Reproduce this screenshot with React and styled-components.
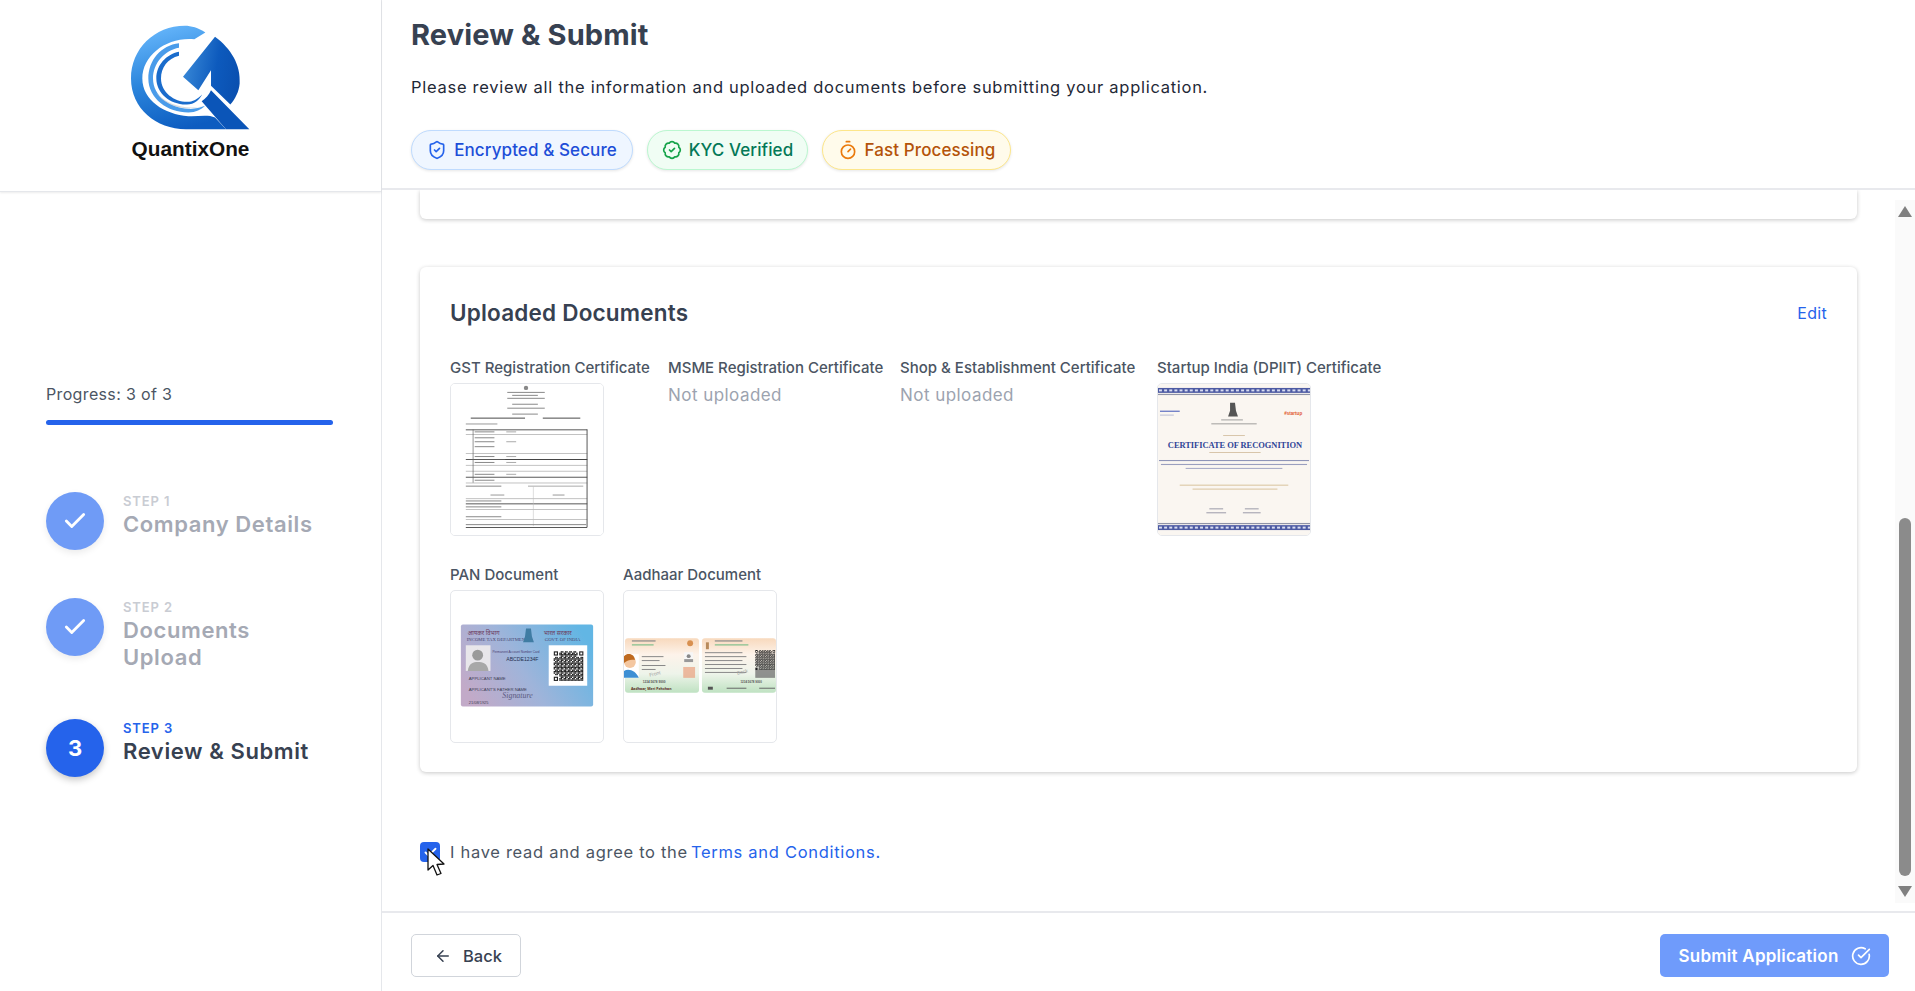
import React from 'react';
import styled, { createGlobalStyle } from 'styled-components';
import { ArrowLeft, BadgeCheck, Check, CircleCheckBig, ShieldCheck, Timer } from 'lucide-react';

const GlobalStyle = createGlobalStyle`
  html, body {
    margin: 0;
    padding: 0;
    background: #fff;
    font-family: Inter, "Noto Sans", sans-serif;
  }
  * {
    box-sizing: border-box;
  }
`;

const Page = styled.div`
  display: grid;
  grid-template-columns: 382px 1fr;
  width: 100%;
  height: 991px;
  overflow: hidden;
  background: #fff;
`;

const Sidebar = styled.aside`
  display: flex;
  flex-direction: column;
  border-right: 1px solid #e5e7eb;
`;

const Brand = styled.div`
  display: flex;
  flex-direction: column;
  align-items: center;
  height: 192px;
  padding-top: 25px;
  border-bottom: 1px solid #e5e7eb;
  box-shadow: 0 1px 2px rgba(0, 0, 0, 0.08);
`;

const BrandName = styled.div`
  margin-top: 5px;
  font-family: "Liberation Sans", Arial, sans-serif;
  font-size: 20.8px;
  line-height: 24px;
  font-weight: 700;
  color: #111;
`;

const SideBody = styled.div`
  padding: 190px 48px 0 46px;
`;

const ProgressLabel = styled.div`
  font-size: 16px;
  line-height: 24px;
  color: #4b5563;
  letter-spacing: 0.35px;
`;

const ProgressBar = styled.div`
  height: 5px;
  margin-top: 14px;
  border-radius: 3px;
  background: #2563eb;
`;

const Steps = styled.div`
  display: flex;
  flex-direction: column;
  gap: 48px;
  margin-top: 67px;
`;

const Step = styled.div`
  display: flex;
  gap: 19px;
`;

const StepCircle = styled.div`
  display: flex;
  flex: none;
  align-items: center;
  justify-content: center;
  width: 58px;
  height: 58px;
  border-radius: 50%;
  background: ${(p) => (p.$done ? '#6f9bf6' : '#2563eb')};
  color: #fff;
  font-size: 22px;
  font-weight: 700;
  box-shadow: 0 3px 7px rgba(0, 0, 0, ${(p) => (p.$done ? 0.08 : 0.22)});
`;

const StepText = styled.div`
  width: 192px;
`;

const StepLabel = styled.div`
  font-size: 13px;
  line-height: 19px;
  font-weight: 600;
  letter-spacing: 0.9px;
  color: ${(p) => (p.$done ? '#c9ccd3' : '#2563eb')};
`;

const StepTitle = styled.div`
  font-size: 22px;
  line-height: 27px;
  font-weight: 600;
  letter-spacing: 0.6px;
  color: ${(p) => (p.$done ? '#a5a9b4' : '#374151')};
`;

const Main = styled.main`
  display: flex;
  flex-direction: column;
  min-width: 0;
`;

const Header = styled.header`
  height: 190px;
  padding: 14px 29px 0;
  border-bottom: 2px solid #e8e9ed;
`;

const Title = styled.h1`
  margin: 0;
  font-size: 29px;
  line-height: 42px;
  font-weight: 700;
  color: #374151;
  letter-spacing: 0.12px;
`;

const Intro = styled.p`
  margin: 19px 0 0;
  font-size: 16.5px;
  line-height: 24px;
  color: #1f2937;
  letter-spacing: 0.72px;
`;

const Badges = styled.div`
  display: flex;
  gap: 14px;
  margin-top: 31px;
`;

const badgeColors = {
  blue: { bg: '#eff6ff', line: '#bfdbfe', text: '#1d4ed8', icon: '#2563eb' },
  green: { bg: '#f0fdf4', line: '#bbf7d0', text: '#047857', icon: '#16a34a' },
  amber: { bg: '#fffbeb', line: '#fde68a', text: '#b45309', icon: '#ea7a0c' },
};

const Badge = styled.span`
  display: inline-flex;
  align-items: center;
  justify-content: center;
  gap: 7px;
  width: ${(p) => p.$width}px;
  height: 40px;
  border: 1.5px solid ${(p) => badgeColors[p.$tone].line};
  border-radius: 20px;
  background: ${(p) => badgeColors[p.$tone].bg};
  color: ${(p) => badgeColors[p.$tone].text};
  font-size: 17px;
  font-weight: 500;
  letter-spacing: 0.1px;
  box-shadow: 0 1px 3px rgba(0, 0, 0, 0.1);

  svg {
    color: ${(p) => badgeColors[p.$tone].icon};
  }
`;

const Middle = styled.div`
  display: flex;
  flex: 1;
  min-height: 0;
`;

const Content = styled.div`
  flex: 1;
  min-width: 0;
  padding: 0 38px;
`;

const CardTail = styled.div`
  height: 29px;
  border-radius: 0 0 6px 6px;
  background: #fff;
  box-shadow: 0 1px 4px rgba(0, 0, 0, 0.22);
  clip-path: inset(0 -6px -6px -6px);
`;

const Card = styled.section`
  height: 505px;
  margin-top: 48px;
  padding: 30px 30px 0;
  border-radius: 6px;
  background: #fff;
  box-shadow: 0 1px 4px rgba(0, 0, 0, 0.22);
`;

const CardHead = styled.div`
  display: flex;
  align-items: center;
  justify-content: space-between;
`;

const CardTitle = styled.h2`
  margin: 0;
  font-size: 22.5px;
  line-height: 32px;
  font-weight: 600;
  letter-spacing: 0.2px;
  color: #374151;
`;

const EditLink = styled.a`
  font-size: 16px;
  color: #2563eb;
  letter-spacing: 0.3px;
`;

const DocRow = styled.div`
  display: grid;
  grid-template-columns: ${(p) => p.$cols};
  column-gap: 19px;
  margin-top: 28px;
`;

const DocLabel = styled.div`
  margin-bottom: 4px;
  font-size: 15px;
  line-height: 22px;
  font-weight: 500;
  color: #4b5563;
  white-space: nowrap;
`;

const DocBox = styled.div`
  width: 154px;
  height: 153px;
  overflow: hidden;
  border: 1px solid #e5e7eb;
  border-radius: 5px;
  background: #fff;

  svg {
    display: block;
    width: 100%;
    height: 100%;
  }
`;

const Missing = styled.div`
  font-size: 17px;
  line-height: 24px;
  color: #9ca3af;
  letter-spacing: 0.45px;
`;

const Terms = styled.div`
  position: relative;
  display: flex;
  align-items: center;
  gap: 10px;
  margin-top: 70px;
  font-size: 16.5px;
  line-height: 20px;
  color: #4b5563;
  letter-spacing: 0.7px;
`;

const CheckMark = styled.span`
  display: flex;
  align-items: center;
  justify-content: center;
  width: 20px;
  height: 20px;
  border-radius: 4px;
  background: #2563eb;
  color: #fff;
`;

const TermsLink = styled.a`
  margin-left: 3px;
  color: #2563eb;
`;

const Pointer = styled.svg`
  position: absolute;
  left: 7px;
  top: 6px;
  width: 20px;
  height: 29px;
`;

const ScrollTrack = styled.div`
  display: flex;
  flex: none;
  flex-direction: column;
  align-items: center;
  width: 20px;
  margin: 10px 0 8px;
  padding: 6px 0;
  background: #fafafa;
`;

const Arrow = styled.div`
  width: 0;
  height: 0;
  border-left: 7px solid transparent;
  border-right: 7px solid transparent;
  border-${(p) => (p.$down ? 'top' : 'bottom')}: 11px solid #808080;
`;

const Thumb = styled.div`
  width: 12px;
  height: 358px;
  margin-top: auto;
  margin-bottom: 10px;
  border-radius: 6px;
  background: #8b8b8b;
`;

const Footer = styled.footer`
  display: flex;
  align-items: flex-start;
  justify-content: space-between;
  height: 80px;
  padding: 21px 26px 0 29px;
  border-top: 2px solid #e8e9ed;
`;

const BackButton = styled.button`
  display: flex;
  align-items: center;
  gap: 11px;
  width: 110px;
  height: 43px;
  padding: 0 0 0 22px;
  border: 1px solid #d1d5db;
  border-radius: 5px;
  background: #fff;
  color: #374151;
  font-family: inherit;
  font-size: 16.5px;
  font-weight: 500;
`;

const SubmitButton = styled.button`
  display: flex;
  align-items: center;
  justify-content: center;
  gap: 12px;
  width: 229px;
  height: 43px;
  border: 0;
  border-radius: 5px;
  background: #6f9bfb;
  color: #fff;
  font-family: inherit;
  font-size: 17px;
  font-weight: 600;
  letter-spacing: 0.25px;
`;

const Logo = () => (
  <svg width="120" height="107" viewBox="60 30 360 320" aria-label="QuantixOne logo">
    <defs>
      <linearGradient id="ringFill" x1="0.3" y1="0" x2="0.55" y2="1">
        <stop offset="0" stopColor="#66b6fb" />
        <stop offset="0.5" stopColor="#2b85dc" />
        <stop offset="1" stopColor="#0d5cc0" />
      </linearGradient>
      <linearGradient id="wedgeFill" x1="0" y1="0.3" x2="1" y2="0.5">
        <stop offset="0" stopColor="#3a8ad8" />
        <stop offset="0.6" stopColor="#0d5abd" />
        <stop offset="1" stopColor="#0a50b0" />
      </linearGradient>
    </defs>
    <path
      d="M283 52 C262 38 240 32 222 32 C130 32 60 102 60 190 C60 280 135 342 225 342 L345 342 L312 307 C290 297 258 305 232 303 C160 298 94 255 94 190 C94 118 170 64 250 72 Z"
      fill="url(#ringFill)"
    />
    <path
      d="M204 84 C150 90 112 135 112 190 C112 250 170 292 232 292 C255 292 270 284 282 272 C265 279 250 282 232 281 C180 278 126 245 126 190 C126 145 160 106 204 98 Z"
      fill="#4a9cea"
    />
    <path
      d="M204 110 C165 118 136 150 136 190 C136 235 180 270 228 268 C250 267 265 254 274 237 C260 252 245 260 228 260 C190 260 150 232 150 190 C150 158 170 130 204 122 Z"
      fill="#1a6ccc"
    />
    <path d="M134 232 C165 272 215 290 278 273 C222 284 170 270 134 232 Z" fill="#c8ccd2" opacity="0.7" />
    <path
      d="M312 65 C360 100 390 150 386 205 C384 230 372 252 358 268 L300 212 L300 165 L262 225 L216 185 Z"
      fill="url(#wedgeFill)"
    />
    <path d="M300 225 L415 342 L345 342 L272 258 C284 250 294 238 300 225 Z" fill="#0b55b8" />
  </svg>
);

const gstRows = [46, 51, 70, 76, 82, 88, 94, 100, 116, 121, 127, 137, 145];

const GstThumb = () => (
  <svg viewBox="0 0 154 153">
    <rect width="154" height="153" fill="#fff" />
    <circle cx="76" cy="4" r="2.2" fill="#888" />
    {[8, 11, 14, 20, 24, 30].map((y, i) => (
      <rect key={y} x={i % 2 ? 62 : 57} y={y} width={i % 2 ? 26 : 38} height="1" fill="#888" />
    ))}
    <rect x="20" y="34" width="55" height="1.2" fill="#666" />
    <rect x="93" y="34" width="38" height="1.2" fill="#666" />
    <rect x="15" y="40" width="32" height="1" fill="#999" />
    {gstRows.map((y, i) => (
      <rect key={y} x="15" y={y} width="123" height={i % 3 === 0 ? 0.9 : 0.6} fill={i % 3 === 0 ? '#444' : '#999'} />
    ))}
    <rect x="137.4" y="46" width="0.9" height="99" fill="#444" />
    <rect x="22" y="46" width="0.7" height="54" fill="#666" />
    <rect x="55" y="76" width="83" height="0.9" fill="#444" />
    <rect x="83" y="104" width="0.5" height="40" fill="#bbb" />
    {[48, 54, 58, 63, 73, 79, 91, 97].map((y) => (
      <rect key={y} x="24" y={y} width="20" height="1" fill="#888" />
    ))}
    {[48, 58, 73, 79, 91].map((y) => (
      <rect key={y} x="56" y={y} width="10" height="1" fill="#aaa" />
    ))}
    {[103, 118, 124, 134, 142].map((y) => (
      <rect key={y} x="15" y={y} width={y === 142 ? 122 : 36} height="1" fill="#888" />
    ))}
    <rect x="78" y="103" width="56" height="1" fill="#aaa" />
    <rect x="40" y="112" width="14" height="1" fill="#999" />
    <rect x="103" y="112" width="12" height="1" fill="#999" />
  </svg>
);

const borderBand = (y) => (
  <g key={y}>
    <rect x="0" y={y} width="154" height="5" fill="#4c5aa3" />
    {Array.from({ length: 30 }, (_, i) => (
      <rect key={i} x={i * 5.2 + 1} y={y + 1.5} width="3" height="2" fill="#d8dcf0" />
    ))}
    <rect x="0" y={y + 6} width="154" height="1.2" fill="#8f93a8" />
  </g>
);

const CertificateThumb = () => (
  <svg viewBox="0 0 154 153">
    <rect width="154" height="153" fill="#faf6f1" />
    {borderBand(4)}
    <g transform="translate(0 148) scale(1 -1)">{borderBand(0)}</g>
    <path d="M73 19 L78 19 L79 27 L81 33 L71 33 L73 27 Z" fill="#555" />
    <rect x="2" y="27" width="20" height="1.2" fill="#5b6cc0" />
    <rect x="2" y="31" width="14" height="1" fill="#b9bdd5" />
    <text x="128" y="31" fontFamily="Liberation Sans" fontSize="4.6" fontWeight="700" fill="#e0552b">
      #startup
    </text>
    <rect x="64" y="36" width="22" height="0.8" fill="#888" />
    <rect x="54" y="40" width="46" height="0.8" fill="#888" />
    <rect x="66" y="52" width="22" height="0.7" fill="#c8b08a" />
    <text
      x="78"
      y="65"
      textAnchor="middle"
      textLength="136"
      fontFamily="Liberation Serif"
      fontSize="8.6"
      fontWeight="700"
      fill="#2f4497"
    >
      CERTIFICATE OF RECOGNITION
    </text>
    <rect x="52" y="69" width="52" height="0.7" fill="#c8b08a" />
    <rect x="1" y="77" width="152" height="1.1" fill="#8f95b8" />
    <rect x="3" y="81" width="148" height="1.1" fill="#9a9fbf" />
    <rect x="28" y="85" width="98" height="1.1" fill="#a9adc8" />
    <rect x="22" y="102" width="110" height="1" fill="#d9c29c" />
    <rect x="35" y="106" width="86" height="1" fill="#d9c29c" />
    <rect x="52" y="126" width="14" height="1" fill="#9a9aa8" />
    <rect x="88" y="126" width="14" height="1" fill="#9a9aa8" />
    <rect x="49" y="130" width="20" height="1" fill="#9a9aa8" />
    <rect x="86" y="130" width="18" height="1" fill="#9a9aa8" />
  </svg>
);

// fake qr pattern, same every render
const QrModules = ({ x, y, size, count }) => {
  const cell = size / count;
  const cells = [];
  for (let r = 0; r < count; r++) {
    for (let c = 0; c < count; c++) {
      const corner = (r < 4 && c < 4) || (r < 4 && c >= count - 4) || (r >= count - 4 && c < 4);
      if (!corner && (r * 7 + c * 13 + r * c) % 3 !== 1) {
        cells.push(<rect key={`${r}-${c}`} x={x + c * cell} y={y + r * cell} width={cell} height={cell} fill="#222" />);
      }
    }
  }
  const finder = [
    [x, y],
    [x + size - cell * 3, y],
    [x, y + size - cell * 3],
  ];
  return (
    <g>
      {cells}
      {finder.map(([fx, fy]) => (
        <rect
          key={`${fx}-${fy}`}
          x={fx + cell * 0.5}
          y={fy + cell * 0.5}
          width={cell * 2.2}
          height={cell * 2.2}
          fill="none"
          stroke="#222"
          strokeWidth={cell * 0.8}
        />
      ))}
    </g>
  );
};

const PanThumb = () => (
  <svg viewBox="0 0 154 153">
    <defs>
      <linearGradient id="panFill" x1="0" y1="0.7" x2="1" y2="0.3">
        <stop offset="0" stopColor="#c2aac8" />
        <stop offset="0.45" stopColor="#9fb4da" />
        <stop offset="1" stopColor="#62b6e4" />
      </linearGradient>
    </defs>
    <rect x="10" y="34" width="134" height="83" rx="2" fill="url(#panFill)" />
    <text x="17" y="45" fontFamily="Noto Sans" fontSize="6" fill="#6d3b5c">
      आयकर विभाग
    </text>
    <text x="94" y="45" fontFamily="Noto Sans" fontSize="6" fill="#6d3b5c">
      भारत सरकार
    </text>
    <text x="16" y="51" fontFamily="Liberation Serif" fontSize="4.8" fill="#4a4670">
      INCOME TAX DEPARTMENT
    </text>
    <text x="95" y="51" fontFamily="Liberation Serif" fontSize="4.8" fill="#4a4670">
      GOVT. OF INDIA
    </text>
    <path d="M76 38 L81 38 L82 46 L84 52 L73 52 L75 46 Z" fill="#3f7ca3" />
    <rect x="15" y="55" width="25" height="26" fill="#e8e6ea" />
    <circle cx="27" cy="65" r="5.5" fill="#9a9a9a" />
    <path d="M17 81 C18 73 23 72 27 72 C32 72 37 73 38 81 Z" fill="#a8a8a8" />
    <text x="42" y="63" fontFamily="Liberation Sans" fontSize="3.2" fill="#4c3f73">
      Permanent Account Number Card
    </text>
    <text x="56" y="71" fontFamily="Liberation Sans" fontSize="5.2" fill="#25304f">
      ABCDE1234F
    </text>
    <rect x="99" y="55" width="39" height="41" fill="#fff" />
    <QrModules x={104} y={61} size={30} count={21} />
    <text x="18" y="90" fontFamily="Liberation Sans" fontSize="4.3" fill="#3d3d54">
      APPLICANT NAME
    </text>
    <text x="18" y="101" fontFamily="Liberation Sans" fontSize="4.3" fill="#3d3d54">
      APPLICANT'S FATHER NAME
    </text>
    <text x="52" y="108" fontFamily="Liberation Serif" fontStyle="italic" fontSize="8" fill="#5a5a80">
      Signature
    </text>
    <text x="18" y="114" fontFamily="Liberation Sans" fontSize="4" fill="#3d3d54">
      21/08/1925
    </text>
  </svg>
);

const AadhaarThumb = () => (
  <svg viewBox="0 0 154 153">
    <defs>
      <linearGradient id="aadhaarFill" x1="0" y1="0" x2="0" y2="1">
        <stop offset="0" stopColor="#f8d9bd" />
        <stop offset="0.3" stopColor="#fdf3ea" />
        <stop offset="0.65" stopColor="#eef4ea" />
        <stop offset="1" stopColor="#bfe2c2" />
      </linearGradient>
    </defs>
    <rect x="1" y="48" width="75" height="55" rx="3" fill="url(#aadhaarFill)" />
    <rect x="79" y="48" width="75" height="55" rx="3" fill="url(#aadhaarFill)" />
    <rect x="8" y="50" width="24" height="1.2" fill="#888" />
    <rect x="8" y="54" width="22" height="1.2" fill="#7fbf8a" />
    <circle cx="67" cy="53" r="3" fill="#d89050" />
    <rect x="1" y="64" width="14" height="24" fill="#fff" />
    <circle cx="6" cy="72" r="6" fill="#f4c7a0" />
    <path d="M0 66 C4 62 11 64 11 70 C7 69 4 70 0 73 Z" fill="#bf6a1f" />
    <path d="M0 88 L0 81 C5 78 12 81 15 88 Z" fill="#3d8fd4" />
    <rect x="18" y="66" width="22" height="1" fill="#888" />
    <rect x="18" y="70" width="18" height="1" fill="#888" />
    <rect x="18" y="75" width="24" height="1" fill="#888" />
    <rect x="18" y="79" width="14" height="1" fill="#888" />
    <rect x="61" y="62" width="9" height="10" fill="#f6f6f6" />
    <circle cx="65.5" cy="66" r="2" fill="#888" />
    <rect x="61" y="69" width="9" height="3" fill="#999" />
    <rect x="60" y="77" width="12" height="11" fill="#e9a07e" opacity="0.7" />
    <text x="26" y="87" fontFamily="Liberation Sans" fontSize="5" fill="#a3a3a3" transform="rotate(-14 26 87)">
      Front
    </text>
    <text x="19" y="93" fontFamily="Liberation Sans" fontSize="3.2" fontWeight="700" fill="#555">
      1234 5678 9000
    </text>
    <text x="7" y="100" fontFamily="Noto Sans" fontSize="3.6" fontWeight="700" fill="#5a2b1f">
      Aadhaar, Meri Pehchan
    </text>
    <rect x="83" y="52" width="3" height="7" fill="#b88a5b" />
    <rect x="92" y="50" width="28" height="1.2" fill="#888" />
    <rect x="92" y="54" width="34" height="1.2" fill="#7fbf8a" />
    {[62, 66, 70, 74, 78, 82].map((y) => (
      <rect key={y} x="82" y={y} width={y % 8 === 2 ? 42 : 38} height="1" fill="#888" />
    ))}
    <QrModules x={133} y={60} size={20} count={24} />
    <rect x="133" y="80" width="20" height="8" fill="#666" opacity="0.7" />
    <text x="115" y="85" fontFamily="Liberation Sans" fontSize="5" fill="#a3a3a3" transform="rotate(-14 115 85)">
      Back
    </text>
    <text x="118" y="93" fontFamily="Liberation Sans" fontSize="3" fontWeight="700" fill="#555">
      1234 5678 9000
    </text>
    <rect x="85" y="97" width="5" height="3" fill="#555" />
    <rect x="104" y="98" width="20" height="1" fill="#666" />
    <rect x="137" y="98" width="16" height="1" fill="#666" />
  </svg>
);

const firstRow = [
  { label: 'GST Registration Certificate', thumb: <GstThumb /> },
  { label: 'MSME Registration Certificate' },
  { label: 'Shop & Establishment Certificate' },
  { label: 'Startup India (DPIIT) Certificate', thumb: <CertificateThumb /> },
];

const secondRow = [
  { label: 'PAN Document', thumb: <PanThumb /> },
  { label: 'Aadhaar Document', thumb: <AadhaarThumb /> },
];

const Doc = ({ label, thumb }) => (
  <div>
    <DocLabel>{label}</DocLabel>
    {thumb ? <DocBox>{thumb}</DocBox> : <Missing>Not uploaded</Missing>}
  </div>
);

const steps = [
  { label: 'STEP 1', title: 'Company Details', done: true },
  { label: 'STEP 2', title: 'Documents Upload', done: true },
  { label: 'STEP 3', title: 'Review & Submit', done: false, num: 3 },
];

const App = () => {
  return (
    <Page>
      <GlobalStyle />
      <Sidebar>
        <Brand>
          <Logo />
          <BrandName>QuantixOne</BrandName>
        </Brand>
        <SideBody>
          <ProgressLabel>Progress: 3 of 3</ProgressLabel>
          <ProgressBar />
          <Steps>
            {steps.map((step) => (
              <Step key={step.label}>
                <StepCircle $done={step.done}>
                  {step.done ? <Check size={26} strokeWidth={2.6} /> : step.num}
                </StepCircle>
                <StepText>
                  <StepLabel $done={step.done}>{step.label}</StepLabel>
                  <StepTitle $done={step.done}>{step.title}</StepTitle>
                </StepText>
              </Step>
            ))}
          </Steps>
        </SideBody>
      </Sidebar>
      <Main>
        <Header>
          <Title>Review &amp; Submit</Title>
          <Intro>Please review all the information and uploaded documents before submitting your application.</Intro>
          <Badges>
            <Badge $tone="blue" $width={222}>
              <ShieldCheck size={20} />
              Encrypted &amp; Secure
            </Badge>
            <Badge $tone="green" $width={161}>
              <BadgeCheck size={20} />
              KYC Verified
            </Badge>
            <Badge $tone="amber" $width={189}>
              <Timer size={20} />
              Fast Processing
            </Badge>
          </Badges>
        </Header>
        <Middle>
          <Content>
            <CardTail />
            <Card>
              <CardHead>
                <CardTitle>Uploaded Documents</CardTitle>
                <EditLink>Edit</EditLink>
              </CardHead>
              <DocRow $cols="199px 213px 238px 1fr">
                {firstRow.map((doc) => (
                  <Doc key={doc.label} {...doc} />
                ))}
              </DocRow>
              <DocRow $cols="154px 1fr">
                {secondRow.map((doc) => (
                  <Doc key={doc.label} {...doc} />
                ))}
              </DocRow>
            </Card>
            <Terms>
              <CheckMark>
                <Check size={15} strokeWidth={3} />
              </CheckMark>
              <span>
                I have read and agree to the
                <TermsLink>Terms and Conditions.</TermsLink>
              </span>
              <Pointer viewBox="0 0 20 29">
                <path
                  d="M1 1 L1 22 L6 17.5 L10 27 L14 25.5 L10 16.5 L17 16 Z"
                  fill="#fff"
                  stroke="#111"
                  strokeWidth="1.3"
                  strokeLinejoin="round"
                />
              </Pointer>
            </Terms>
          </Content>
          <ScrollTrack>
            <Arrow />
            <Thumb />
            <Arrow $down />
          </ScrollTrack>
        </Middle>
        <Footer>
          <BackButton>
            <ArrowLeft size={18} />
            Back
          </BackButton>
          <SubmitButton>
            Submit Application
            <CircleCheckBig size={20} />
          </SubmitButton>
        </Footer>
      </Main>
    </Page>
  );
};

export default App;
